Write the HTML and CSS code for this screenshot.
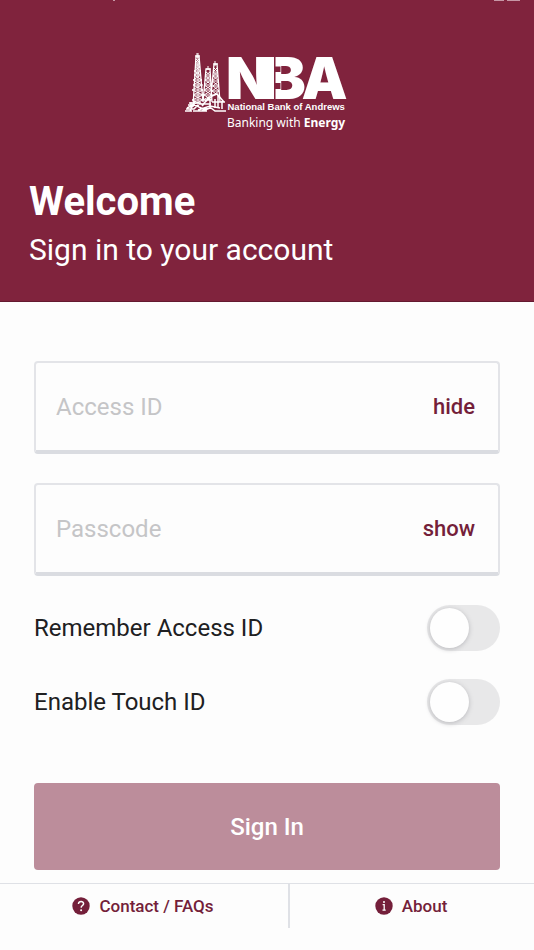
FILE: index.html
```html
<!DOCTYPE html>
<html lang="en">
<head>
<meta charset="utf-8">
<meta name="viewport" content="width=device-width, initial-scale=1">
<title>National Bank of Andrews - Sign In</title>
<link rel="stylesheet" href="styles.css">
</head>
<body>
<header class="hero">
  <div class="status" aria-hidden="true"><span class="dot"></span><span class="signal"></span><span class="battery"></span></div>
  <svg class="logo" viewBox="0 0 328 164" role="img" aria-label="National Bank of Andrews, Banking with Energy">
    <g transform="scale(2)" fill="none" stroke="currentColor" stroke-width="1">
      <path stroke-width="1.3" d="M8 55L11 4h3l4 46M18 50L21 17h4l2 33M26 44L29 12h3l3 38"/>
      <path d="M12 1v5M13 1v5M10 4h5M23 14v4M21 17h5M30 9v5M28 12h5"/>
      <path d="M11 7l4 4-5 4 6 4-7 4 8 5-9 5 10 5-10 5 10 5-11 5M14 7l-4 4 5 4-6 4 7 4-8 5 9 5-10 5 11 5-11 5 12 5"/>
      <path d="M10 11h5M10 15h5M10 19h6M9 23h7M9 28h8M9 33h9M9 38h9M9 43h10M8 48h11M13 5v49"/>
      <path d="M21 20l5 4-6 4 7 5-8 5 8 5-9 5M25 20l-5 4 6 4-7 5 8 5-8 5 8 5M20 24h5M20 28h6M20 33h7M19 38h7M19 43h9"/>
      <path d="M29 16l4 4-5 4 6 5-6 5 6 5-7 5M32 16l-4 4 5 4-6 5 7 5-7 5 7 5M28 20h5M28 24h5M27 29h6M27 34h7M27 39h7"/>
      <path stroke-width="1.5" d="M17 53l10-9 5-2 7 8M14 52h12M24 45l-7 9M19 48h7M33 43v12M37 49v8M27 50h13M25 47v9M30 47v9"/>
      <path stroke-width="1.5" d="M4 51h12M1 57h8l3-3 6 3 8-1 4 3h11M0 59h7M8 59h14M2 56l6-3 6 1M3 53h7M6 50v6M10 49l-5 10M25 56l-8 3M13 58l12-4 10 2"/>
    </g>
    <g class="initials">
      <text x="233" y="94">A</text>
      <text x="164" y="94">B</text>
      <text x="82" y="94">N</text>
    </g>
    <path fill="currentColor" d="M150 10h28v84h-28z"/>
    <path fill="#80233d" d="M178 9h3v86h-3zM181 29h10v11h-10zM181 62h10v12h-10z"/>
    <text class="bank" x="85" y="116">National Bank of Andrews</text>
    <text class="motto" x="84" y="149">Banking with <tspan class="strong">Energy</tspan></text>
  </svg>
  <h1>Welcome</h1>
  <p>Sign in to your account</p>
</header>
<main>
  <form>
    <div class="field">
      <input type="text" placeholder="Access ID" aria-label="Access ID">
      <button type="button" class="reveal">hide</button>
    </div>
    <div class="field">
      <input type="password" placeholder="Passcode" aria-label="Passcode">
      <button type="button" class="reveal">show</button>
    </div>
    <div class="option">
      <label for="remember">Remember Access ID</label>
      <input id="remember" class="switch" type="checkbox" role="switch">
    </div>
    <div class="option">
      <label for="touch">Enable Touch ID</label>
      <input id="touch" class="switch" type="checkbox" role="switch">
    </div>
    <button type="submit" class="submit">Sign In</button>
  </form>
</main>
<footer>
  <a class="contact" href="#contact">
    <svg viewBox="0 0 18 18" aria-hidden="true"><circle cx="9" cy="9" r="8.7" fill="currentColor"/><path d="M6.5 7C6.4 3.6 11.7 3.7 11.6 6.8C11.5 8.5 9.2 8.6 9.1 10.6" fill="none" stroke="#fdfdfd" stroke-width="1.5"/><circle cx="9.1" cy="13.2" r="1" fill="#fdfdfd"/></svg>
    Contact / FAQs
  </a>
  <a class="about" href="#about">
    <svg viewBox="0 0 18 18" aria-hidden="true"><circle cx="9" cy="9" r="8.7" fill="currentColor"/><circle cx="9" cy="5" r="1" fill="#fdfdfd"/><path d="M7.6 7.6H9.2V13M7.5 13.2h3.2" fill="none" stroke="#fdfdfd" stroke-width="1.3"/></svg>
    About
  </a>
</footer>
</body>
</html>
```
FILE: styles.css
```css
* {
  box-sizing: border-box;
}

body {
  margin: 0;
  background: #fdfdfd;
  color: #202022;
  font-family: Roboto, "Liberation Sans", sans-serif;
}

button,
input {
  font-family: inherit;
}

.hero {
  padding: 0 29px 31px;
  background: #80233d;
  border-bottom: 1px solid #641930;
  color: #fff;
}

.status {
  display: flex;
  gap: 3px;
  height: 1px;
  padding: 0 0 0 84px;
  margin-right: -15px;
}

.status span {
  background: #c796a5;
}

.dot {
  width: 2px;
  margin-right: auto;
}

.signal {
  width: 10px;
}

.battery {
  width: 13px;
}

.logo {
  display: block;
  width: 164px;
  height: 82px;
  margin: 51px auto 44px;
  overflow: visible;
}

.logo text {
  fill: currentColor;
}

.initials {
  font: 900 116px Inter, "Liberation Sans", sans-serif;
  stroke: #80233d;
  stroke-width: 3px;
  paint-order: stroke;
}

.bank {
  font: bold 19px "Liberation Sans", Arial, sans-serif;
}

.motto {
  font: 24px "Noto Sans", sans-serif;
}

.strong {
  font-weight: bold;
}

h1 {
  margin: 0;
  font-size: 40px;
  line-height: 48px;
  font-weight: 700;
}

.hero p {
  margin: 4px 0 0;
  font-size: 30px;
  line-height: 40px;
}

main {
  padding: 59px 34px 13px;
}

.field {
  display: flex;
  align-items: center;
  height: 93px;
  margin-bottom: 29px;
  padding: 0 23px 0 20px;
  border: 2px solid #e3e4e8;
  border-bottom: 4px solid #dadce1;
  border-radius: 4px;
}

.field input {
  flex: 1;
  min-width: 0;
  padding: 0;
  border: 0;
  outline: 0;
  background: transparent;
  color: inherit;
  font-size: 24px;
  line-height: 32px;
}

.field input::placeholder {
  color: #c5c5c7;
  opacity: 1;
}

.reveal {
  padding: 0;
  border: 0;
  background: none;
  color: #741f3a;
  font-size: 22px;
  line-height: 32px;
  font-weight: 500;
}

.option {
  display: flex;
  align-items: center;
  justify-content: space-between;
  margin-bottom: 28px;
  font-size: 24px;
  line-height: 32px;
}

.switch {
  appearance: none;
  width: 73px;
  height: 46px;
  margin: 0;
  padding: 3px;
  border-radius: 23px;
  background: #e8e8e9;
}

.switch::before {
  content: "";
  display: block;
  width: 39px;
  height: 40px;
  border-radius: 50%;
  background: #fefefe;
  box-shadow: 0 1px 5px #b8b8bc;
}

.switch:checked {
  background: #80233d;
}

.switch:checked::before {
  margin-left: auto;
}

.submit {
  display: block;
  width: 100%;
  height: 87px;
  margin-top: 58px;
  border: 0;
  border-radius: 4px;
  background: #bc8d9b;
  color: #fff;
  font-size: 24px;
  font-weight: 500;
}

footer {
  display: flex;
  border-top: 1px solid #dfe1e6;
}

footer a {
  display: flex;
  align-items: center;
  justify-content: center;
  gap: 9px;
  height: 44px;
  padding-right: 2px;
  color: #741f3a;
  font-size: 17px;
  font-weight: 500;
  text-decoration: none;
}

footer svg {
  width: 18px;
  height: 18px;
}

.contact {
  flex: 13;
  border-right: 2px solid #dfe1e6;
}

.about {
  flex: 11;
}
```
